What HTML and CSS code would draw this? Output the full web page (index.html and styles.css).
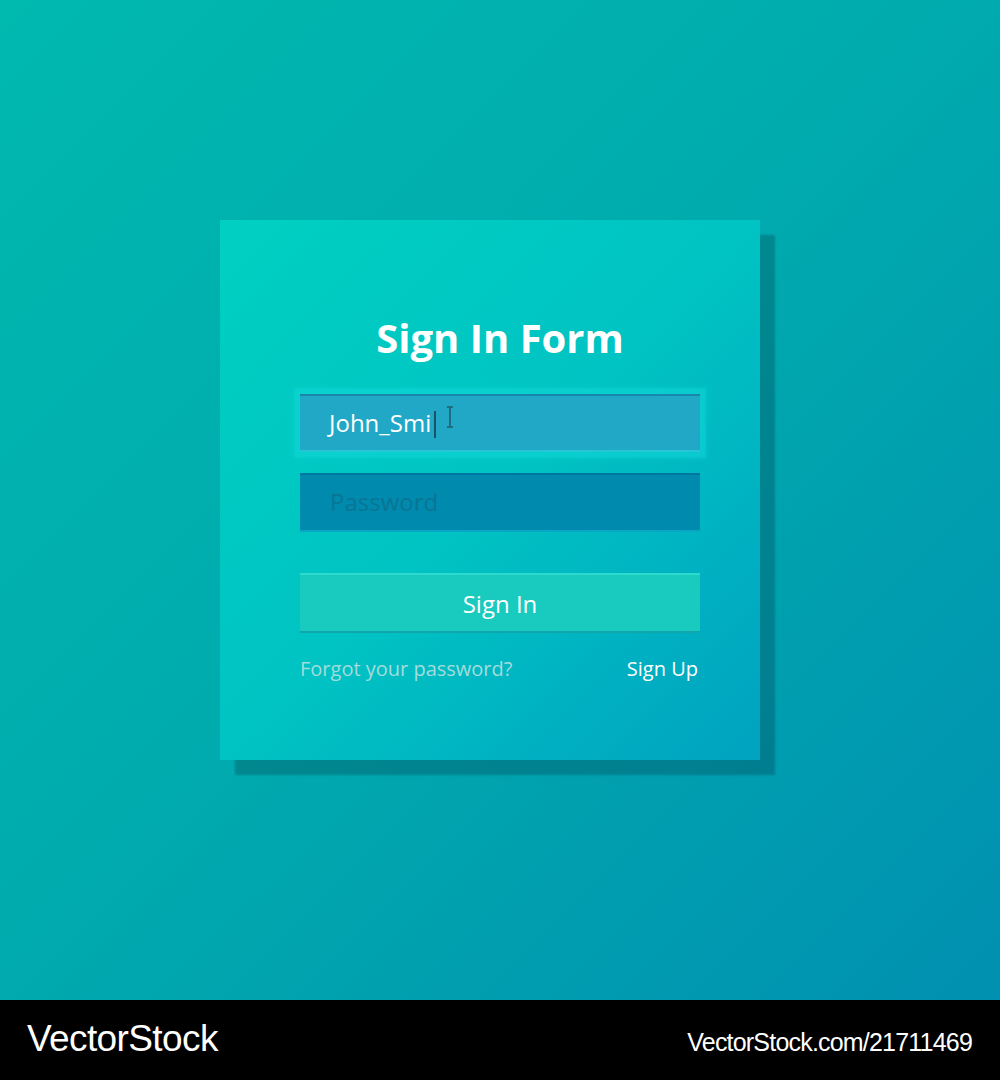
FILE: index.html
```html
<!DOCTYPE html>
<html lang="en">
<head>
<meta charset="utf-8">
<title>Sign In Form</title>
<link rel="stylesheet" href="styles.css">
</head>
<body>
<div class="stage">
  <div class="card">
    <h1 class="title">Sign In Form</h1>
    <div class="field field-active">
      <span class="value">John_Smi</span><span class="caret"></span>
      <svg class="ibeam" width="8" height="22" viewBox="0 0 8 22"><path d="M1 1h6M4 1v20M1 21h6" stroke="#1e6070" stroke-width="1.6" fill="none"/></svg>
    </div>
    <div class="field field-pass">
      <span class="placeholder">Password</span>
    </div>
    <div class="button">Sign In</div>
    <div class="links">
      <span class="forgot">Forgot your password?</span>
      <span class="signup">Sign Up</span>
    </div>
  </div>
</div>
<div class="footer">
  <span class="brand">VectorStock</span>
  <span class="ref">VectorStock.com/21711469</span>
</div>
</body>
</html>
```
FILE: styles.css
```css
html, body {
  margin: 0;
  padding: 0;
}
body {
  width: 1000px;
  font-family: "Open Sans", "Noto Sans", sans-serif;
}
.stage {
  height: 1000px;
  box-sizing: border-box;
  padding: 220px 0 0 220px;
  background: linear-gradient(135deg, #00b9af 0%, #00aaae 50%, #0090b1 100%);
}
.card {
  width: 540px;
  height: 540px;
  box-sizing: border-box;
  padding: 94px 60px 0 80px;
  background: linear-gradient(135deg, #00d0c1 0%, #00c3c3 50%, #00a2c0 100%);
  box-shadow: 15px 15px 2px rgba(0, 70, 85, 0.34);
  display: flex;
  flex-direction: column;
}
.title {
  margin: 0 0 32px;
  font-size: 40px;
  line-height: 48px;
  font-weight: 700;
  color: #ffffff;
  text-align: center;
}
.field {
  position: relative;
  height: 58px;
  box-sizing: border-box;
  display: flex;
  align-items: center;
  padding-left: 29px;
  font-size: 24px;
}
.field-active {
  background: #22a8c7;
  border-top: 2px solid #1787ab;
  border-bottom: 2px solid #27c6d6;
  height: 58px;
  box-shadow: 0 0 2px 6px rgba(20, 220, 220, 0.42), 0 0 6px 8px rgba(20, 215, 215, 0.18);
}
.value {
  color: #ffffff;
  margin-top: -2px;
}
.caret {
  display: inline-block;
  width: 2px;
  height: 27px;
  margin-left: 3px;
  margin-top: 2px;
  background: #1a5366;
}
.ibeam {
  position: absolute;
  left: 146px;
  top: 10px;
}
.field-pass {
  margin-top: 21px;
  height: 59px;
  background: #008aad;
  border-top: 2px solid #0077a0;
  border-bottom: 2px solid #0aa6c6;
  padding-left: 30px;
}
.placeholder {
  color: #0a7595;
  margin-top: -2px;
}
.button {
  margin-top: 41px;
  height: 60px;
  box-sizing: border-box;
  background: #19cbbf;
  border-top: 2px solid #2ddacd;
  border-bottom: 2px solid #10a6ac;
  color: #ffffff;
  font-size: 24px;
  display: flex;
  align-items: center;
  justify-content: center;
}
.links {
  margin-top: 22px;
  display: flex;
  justify-content: space-between;
  font-size: 20px;
  line-height: 28px;
  padding-right: 2px;
}
.forgot {
  color: #a3dcdc;
}
.signup {
  color: #ffffff;
}
.footer {
  height: 80px;
  background: #000000;
  display: flex;
  align-items: center;
  justify-content: space-between;
  padding: 0 28px 0 27px;
  font-family: "Liberation Sans", Arial, sans-serif;
  color: #ffffff;
}
.brand {
  font-size: 37px;
  letter-spacing: -0.6px;
  margin-top: -2px;
}
.ref {
  font-size: 25px;
  letter-spacing: -0.8px;
  margin-top: 4px;
}
```
